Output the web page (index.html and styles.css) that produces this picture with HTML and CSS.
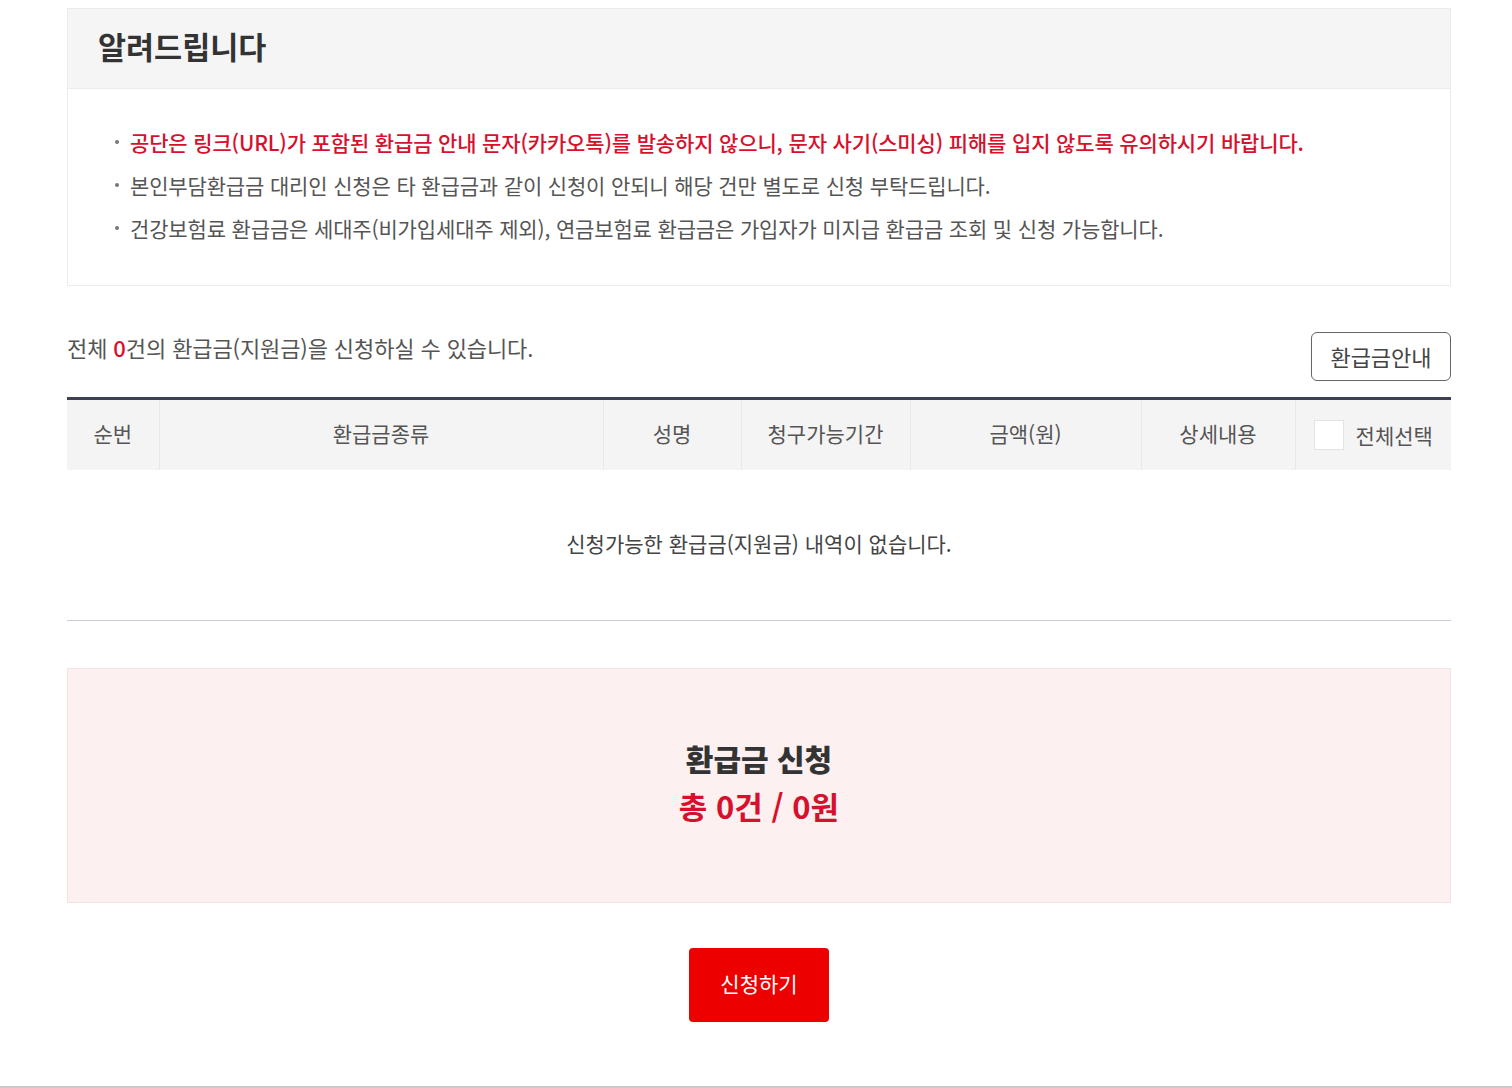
FILE: index.html
```html
<!DOCTYPE html>
<html lang="ko">
<head>
    <meta charset="UTF-8">
    <title>환급금 신청</title>
    <link rel="stylesheet" href="styles.css">
</head>
<body>
    <div class="wrap">
        <div class="notice">
            <div class="notice-head">알려드립니다</div>
            <ul class="notice-body">
                <li class="red">공단은 링크(URL)가 포함된 환급금 안내 문자(카카오톡)를 발송하지 않으니, 문자 사기(스미싱) 피해를 입지 않도록 유의하시기 바랍니다.</li>
                <li>본인부담환급금 대리인 신청은 타 환급금과 같이 신청이 안되니 해당 건만 별도로 신청 부탁드립니다.</li>
                <li>건강보험료 환급금은 세대주(비가입세대주 제외), 연금보험료 환급금은 가입자가 미지급 환급금 조회 및 신청 가능합니다.</li>
            </ul>
        </div>

        <div class="summary">
            <p>전체 <em>0</em>건의 환급금(지원금)을 신청하실 수 있습니다.</p>
            <button class="btn-line">환급금안내</button>
        </div>

        <table class="list">
            <thead>
                <tr>
                    <th class="c1">순번</th>
                    <th class="c2">환급금종류</th>
                    <th class="c3">성명</th>
                    <th class="c4">청구가능기간</th>
                    <th class="c5">금액(원)</th>
                    <th class="c6">상세내용</th>
                    <th class="c7"><label class="chk"><span class="box"></span>전체선택</label></th>
                </tr>
            </thead>
            <tbody>
                <tr>
                    <td colspan="7" class="empty">신청가능한 환급금(지원금) 내역이 없습니다.</td>
                </tr>
            </tbody>
        </table>

        <div class="total">
            <strong>환급금 신청</strong>
            <span>총 0건 / 0원</span>
        </div>

        <div class="btns">
            <button class="btn-red">신청하기</button>
        </div>
    </div>
    <div class="foot"></div>
</body>
</html>
```

FILE: styles.css
```css
*{
    padding: 0;
    margin: 0;
    box-sizing: border-box;
}
body{
    font-family: "Noto Sans CJK KR", "Noto Sans", sans-serif;
    color: #444;
    background: #fff;
}
li{
    list-style: none;
}
.wrap{
    width: 1384px;
    margin-left: 67px;
    padding-top: 8px;
}

/* 알려드립니다 */
.notice{
    border: 1px solid #ebebeb;
}
.notice-head{
    height: 80px;
    line-height: 74px;
    padding-left: 30px;
    background: #f5f5f5;
    border-bottom: 1px solid #ebebeb;
    font-size: 30.5px;
    font-weight: bold;
    color: #333;
}
.notice-body{
    padding: 32px 30px 35px 62px;
    background: #fff;
}
.notice-body li{
    position: relative;
    font-size: 21px;
    line-height: 43px;
    color: #555;
    letter-spacing: -0.15px;
}
.notice-body li::before{
    content: '';
    position: absolute;
    left: -15px;
    top: 19px;
    width: 4px;
    height: 4px;
    border-radius: 50%;
    background: #777;
}
.notice-body li.red{
    color: #d7102d;
    font-weight: 500;
}

/* 건수 + 안내버튼 */
.summary{
    display: flex;
    justify-content: space-between;
    align-items: flex-start;
    margin-top: 46px;
}
.summary p{
    font-size: 22px;
    line-height: 30px;
    color: #555;
    letter-spacing: -0.1px;
}
.summary em{
    font-style: normal;
    color: #d7102d;
    font-weight: 500;
}
.btn-line{
    width: 140px;
    height: 49px;
    padding-bottom: 2px;
    border: 1px solid #666;
    border-radius: 6px;
    background: #fff;
    font-family: inherit;
    font-size: 22px;
    color: #444;
    cursor: pointer;
}

/* 목록 */
.list{
    width: 100%;
    margin-top: 16px;
    border-collapse: collapse;
    border-top: 3px solid #3c4053;
}
.list th{
    height: 71px;
    padding-bottom: 4px;
    background: #f4f4f4;
    border-left: 1px solid #e7e8ec;
    font-size: 21px;
    font-weight: normal;
    color: #555;
}
.list th:first-child{
    border-left: none;
}
.c1{width: 92px;}
.c2{width: 444px;}
.c3{width: 138px;}
.c4{width: 169px;}
.c5{width: 231px;}
.c6{width: 154px;}
.chk{
    display: flex;
    align-items: center;
    justify-content: center;
    gap: 12px;
    padding-top: 5px;
}
.chk .box{
    width: 30px;
    height: 30px;
    background: #fff;
    border: 1px solid #e3e3e3;
}
.list td.empty{
    height: 151px;
    padding-bottom: 4px;
    text-align: center;
    font-size: 21px;
    color: #444;
    border-bottom: 1px solid #c9ccd9;
}

/* 합계 */
.total{
    display: flex;
    flex-direction: column;
    align-items: center;
    justify-content: center;
    height: 235px;
    padding-bottom: 8px;
    margin-top: 47px;
    background: #fdf0f0;
    border: 1px solid #f5e3e3;
    font-size: 30px;
    font-weight: bold;
    line-height: 48px;
}
.total strong{
    color: #333;
}
.total span{
    color: #d7102d;
    font-size: 31px;
}

.btns{
    display: flex;
    justify-content: center;
    margin-top: 45px;
}
.btn-red{
    width: 140px;
    height: 74px;
    padding-bottom: 4px;
    border: none;
    border-radius: 4px;
    background: #ec0000;
    color: #fff;
    font-family: inherit;
    font-size: 21px;
    cursor: pointer;
}

.foot{
    margin-top: 64px;
    border-top: 2px solid #c9c9c9;
}
```
